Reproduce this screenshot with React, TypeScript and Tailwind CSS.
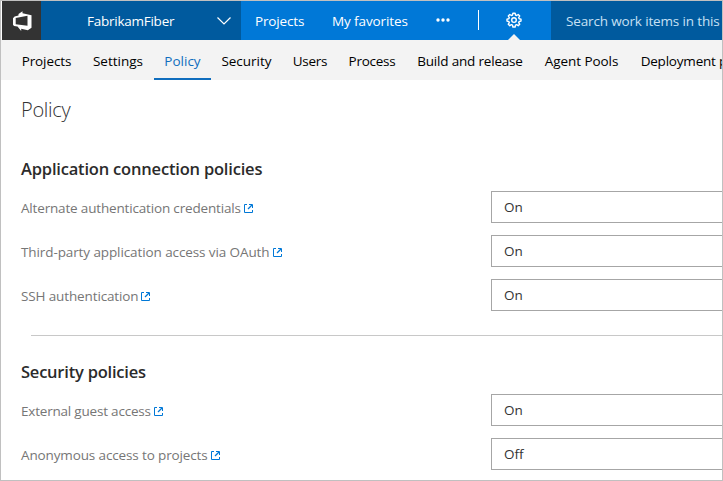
import { clsx } from 'clsx';

function DevOpsLogo() {
  return (
    <svg width="22" height="22" viewBox="0 0 22 22" fill="#fff" aria-hidden="true">
      <path
        fillRule="evenodd"
        d="M7.500 4 11.500 1.200v2.100l9 2v12.400l-3.700 2.600-6.600-1.500v2.200L6.500 16.500l-3.500-.6-1-1.200V8.300l1.600-1.900 3.900-1zM4.700 7.900v6.400l11.800 1.500V5.800z"
      />
    </svg>
  );
}

function Gear() {
  return (
    <svg width="16" height="16" viewBox="0 0 16 16" fill="none" stroke="#fff" aria-hidden="true">
      <path
        strokeWidth="1.4"
        strokeLinejoin="round"
        d="M6.900 1.200h2.200l.4 1.800 1.100.5 1.600-1 1.500 1.500-1 1.600.5 1.100 1.800.4v2l-1.800.4-.5 1.100 1 1.600-1.500 1.500-1.600-1-1.100.5-.4 1.800H6.900l-.4-1.800-1.100-.5-1.600 1-1.500-1.500 1-1.600-.5-1.100L1 9.100v-2l1.800-.4.5-1.100-1-1.600 1.500-1.500 1.600 1L6.500 3z"
      />
      <circle cx="8" cy="8.100" r="2.300" strokeWidth="1.400" />
    </svg>
  );
}

function ExternalLink() {
  return (
    <svg className="ml-[3px] shrink-0" width="9" height="9" viewBox="0 0 9 9" fill="none" stroke="#0078d7" aria-hidden="true">
      <path d="M3 .5H.5v8h8V6" />
      <path d="M5 .5h3.500V4" />
      <path d="M8 1 4 5" strokeWidth="1.200" />
    </svg>
  );
}

const tabs = [
  { label: 'Projects', box: 'w-[71px]', track: 'tracking-[-0.1px]' },
  { label: 'Settings', box: 'w-[72px]', track: '' },
  { label: 'Policy', box: 'w-[57px]', track: '', active: true },
  { label: 'Security', box: 'w-[71px]', track: '' },
  { label: 'Users', box: 'w-[56px]', track: 'tracking-[-0.25px]' },
  { label: 'Process', box: 'w-[68px]', track: 'tracking-[-0.24px]' },
  { label: 'Build and release', box: 'w-[128px]', track: 'tracking-[-0.19px]' },
  { label: 'Agent Pools', box: 'w-[95px]', track: 'tracking-[-0.05px]' },
  { label: 'Deployment pools', box: 'w-[135px]', track: 'tracking-[-0.2px]' },
];

const connection = [
  { label: 'Alternate authentication credentials', track: 'tracking-[-0.17px]', value: 'On' },
  { label: 'Third-party application access via OAuth', track: 'tracking-[-0.1px]', value: 'On' },
  { label: 'SSH authentication', track: 'tracking-[-0.13px]', value: 'On' },
];

const security = [
  { label: 'External guest access', track: 'tracking-[-0.2px]', value: 'On' },
  { label: 'Anonymous access to projects', track: 'tracking-[-0.13px]', value: 'Off' },
];

function PolicyRows({ rows }: { rows: typeof connection }) {
  return (
    <div className="flex flex-col gap-3">
      {rows.map((r) => (
        <div key={r.label} className="flex h-8">
          <div className="flex w-[470px] shrink-0 items-center pt-[2px] text-[#767676]">
            <span className={r.track}>{r.label}</span>
            <ExternalLink />
          </div>
          <div className="flex flex-1 items-center border border-r-0 border-[#a6a6a6] pl-3 text-[#333]">{r.value}</div>
        </div>
      ))}
    </div>
  );
}

export default function App() {
  return (
    <div className="h-[481px] w-[723px] overflow-hidden border border-[#c0c0c0] bg-white font-['Open_Sans',sans-serif] text-[13.5px] leading-5 whitespace-nowrap">
      <header className="ml-px flex h-[39px] text-white">
        <div className="flex w-[39px] items-center justify-center bg-[#333]">
          <DevOpsLogo />
        </div>
        <div className="flex w-[200px] items-center bg-[#005a9e] pt-px pl-[46px]">
          <span className="w-[129px] tracking-[-0.25px]">FabrikamFiber</span>
          <svg width="16" height="10" viewBox="0 0 16 10" fill="none" stroke="#fff" strokeWidth="1.2" aria-hidden="true">
            <path d="m1.500 1.500 6.500 6.500 6.500-6.500" />
          </svg>
        </div>
        <div className="flex w-[310px] bg-[#0078d7]">
          <span className="mt-[10px] ml-[14px] w-[77px] tracking-[-0.15px]">Projects</span>
          <span className="mt-[10px] w-[104px] tracking-[-0.1px]">My favorites</span>
          <svg className="mt-[17px]" width="14" height="4" viewBox="0 0 14 4" fill="#fff" aria-hidden="true">
            <circle cx="2" cy="2" r="1.700" />
            <circle cx="7" cy="2" r="1.700" />
            <circle cx="12" cy="2" r="1.700" />
          </svg>
          <div className="mt-[9px] ml-[28px] h-5 w-px bg-white" />
          <div className="ml-[27px] flex w-4 flex-col items-center justify-between pt-[11px]">
            <Gear />
            <svg className="shrink-0" width="12" height="6" viewBox="0 0 12 6" aria-hidden="true">
              <path d="M0 6 6 0l6 6z" fill="#f3f3f3" />
            </svg>
          </div>
        </div>
        <div className="flex-1 overflow-hidden bg-[#005a9e] pt-[10px] pl-[15px] tracking-[-0.15px] text-[#c7e0f4]">
          Search work items in this
        </div>
      </header>
      <nav className="flex h-10 overflow-hidden bg-[#f3f3f3] pl-[10px] text-black">
        {tabs.map((t) => (
          <div
            key={t.label}
            className={clsx('flex shrink-0 justify-center border-b-2 pt-[11px]', t.box, t.track, t.active ? 'border-[#106ebe] text-[#106ebe]' : 'border-transparent')}
          >
            {t.label}
          </div>
        ))}
      </nav>
      <main className="pl-5">
        <h1 className="pt-4 text-[20px] leading-7 font-light tracking-[-0.3px] text-[#333]">Policy</h1>
        <h2 className="mt-[33px] text-[16.5px] leading-6 font-semibold tracking-[-0.19px] text-[#2b2b2b]">Application connection policies</h2>
        <div className="mt-[10px]">
          <PolicyRows rows={connection} />
        </div>
        <hr className="mt-6 ml-[10px] border-[#c8c8c8]" />
        <h2 className="mt-6 text-[16.5px] leading-6 font-semibold tracking-[-0.22px] text-[#2b2b2b]">Security policies</h2>
        <div className="mt-[10px]">
          <PolicyRows rows={security} />
        </div>
      </main>
    </div>
  );
}
